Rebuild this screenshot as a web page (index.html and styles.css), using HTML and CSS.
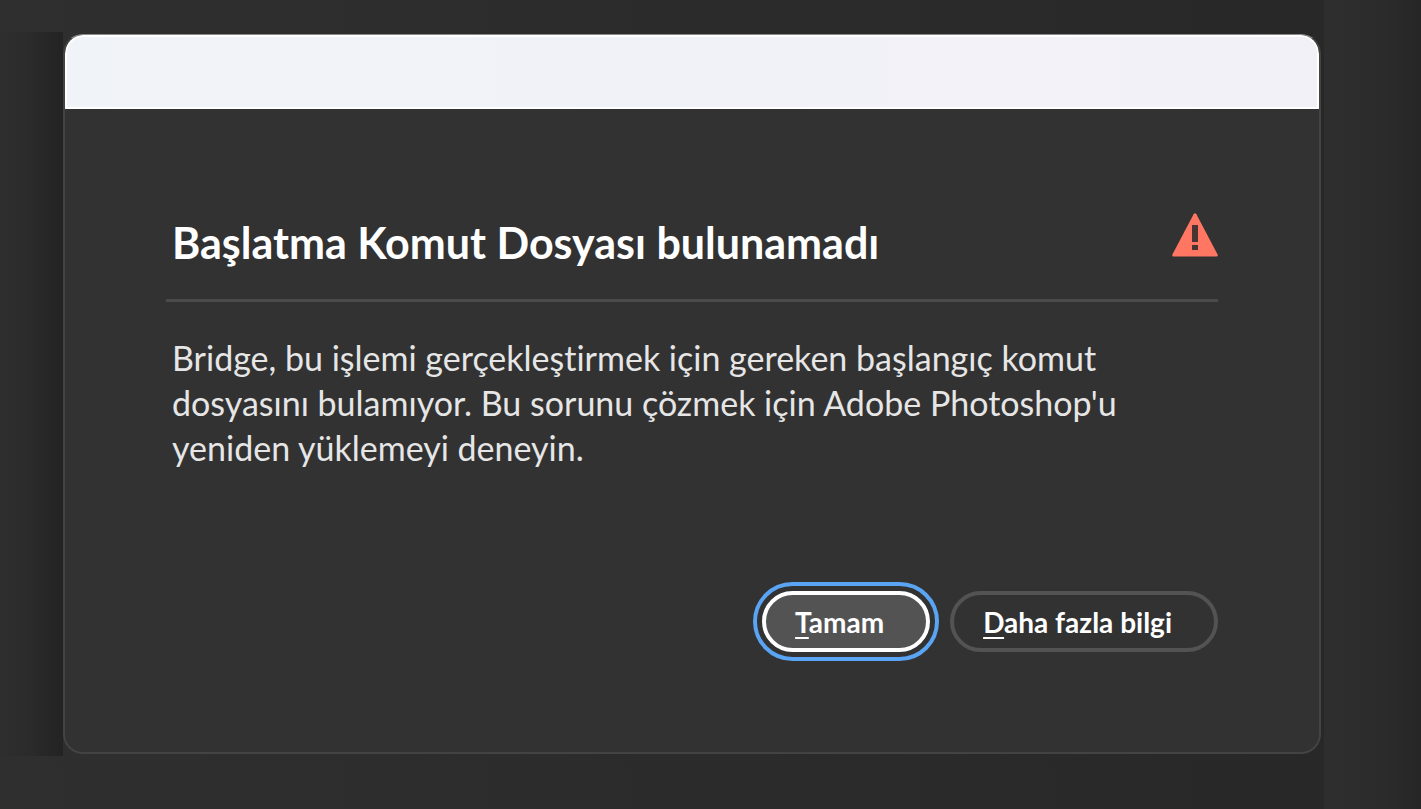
FILE: index.html
```html
<!DOCTYPE html>
<html lang="tr">
<head>
    <meta charset="UTF-8">
    <meta name="viewport" content="width=device-width, initial-scale=1.0">
    <title>Başlatma Komut Dosyası bulunamadı</title>
    <link rel="stylesheet" href="styles.css">
</head>
<body>
    <div class="backdrop">
        <div class="backdrop-row">
            <div class="side-shade"></div>

            <div class="dialog" role="alertdialog" aria-labelledby="dialog-title" aria-describedby="dialog-message">
                <div class="title-bar"></div>

                <div class="dialog-content">
                    <header class="dialog-header">
                        <h1 class="dialog-title" id="dialog-title">Başlatma Komut Dosyası bulunamadı</h1>
                        <svg class="warning-icon" viewBox="0 0 46 44" aria-hidden="true">
                            <path d="M21.6 1.2Q23 -.8 24.4 1.2L45.6 41.5Q46.2 43.5 44.5 43.5H1.5Q-.2 43.5 .4 41.5Z" fill="#ff7663"/>
                            <path d="M20 12h6v17h-6zM20 32h6v5h-6z" fill="#4a3431"/>
                        </svg>
                    </header>

                    <p class="dialog-message" id="dialog-message">
                        Bridge, bu işlemi gerçekleştirmek için gereken başlangıç komut<br>
                        dosyasını bulamıyor. Bu sorunu çözmek için Adobe Photoshop'u<br>
                        yeniden yüklemeyi deneyin.
                    </p>

                    <div class="dialog-actions">
                        <button type="button" class="btn btn-primary"><span class="access-key">T</span>amam</button>
                        <button type="button" class="btn"><span class="access-key">D</span>aha fazla bilgi</button>
                    </div>
                </div>
            </div>
        </div>
    </div>

    <div class="edge-strip"></div>
</body>
</html>
```
FILE: styles.css
```css
* {
    margin: 0;
    padding: 0;
    box-sizing: border-box;
}

body {
    font-family: Lato, "Noto Sans", sans-serif;
    font-variant-ligatures: none;
    background: #2c2c2c;
    min-height: 100vh;
    display: flex;
    color: #e6e6e6;
}

.backdrop {
    flex: 1;
    padding: 32px 3px 0 0;
    background: linear-gradient(90deg, #2f2f2f, #282828);
}

.edge-strip {
    width: 97px;
    background: linear-gradient(90deg, #2e2e2e, #2b2b2b 65%, #262626);
}

.backdrop-row {
    display: flex;
}

.side-shade {
    width: 63px;
    background: linear-gradient(90deg, #2e2e2e, #2b2b2b 45%, #232323);
}

/* Dialog */
.dialog {
    flex: 1;
    margin: 2px 0;
    border: 2px solid #434343;
    border-top: 1px solid #8b8b8d;
    border-radius: 20px;
    background: #323232;
    overflow: hidden;
}

.title-bar {
    height: 74px;
    background: linear-gradient(90deg, #f0f3f8, #f2f1f7);
    border: 2px solid #fff;
    border-radius: 18px 18px 0 0;
}

.dialog-content {
    padding: 104px 101px 100px;
}

.dialog-header {
    display: flex;
    justify-content: space-between;
    align-items: flex-start;
    padding-left: 6px;
    padding-bottom: 26px;
    border-bottom: 3px solid #4b4b4b;
}

.dialog-title {
    font-size: 43px;
    line-height: 60px;
    font-weight: bold;
    color: #fff;
}

.warning-icon {
    width: 46px;
    height: 44px;
}

.dialog-message {
    padding-left: 6px;
    margin-top: 33px;
    font-size: 34px;
    line-height: 45px;
}

/* Buttons */
.dialog-actions {
    display: flex;
    justify-content: flex-end;
    gap: 20px;
    margin-top: 121px;
}

.btn {
    height: 61px;
    padding: 0 42px 0 29px;
    border: 4px solid #535353;
    border-radius: 31px;
    background: transparent;
    font-family: inherit;
    font-size: 28px;
    font-weight: bold;
    color: #fff;
}

.btn-primary {
    border-color: #fff;
    background: #535353;
    outline: 4px solid #59a4f3;
    outline-offset: 5px;
}

.access-key {
    text-decoration: underline;
    text-decoration-thickness: 2px;
    text-underline-offset: 4px;
}
```
